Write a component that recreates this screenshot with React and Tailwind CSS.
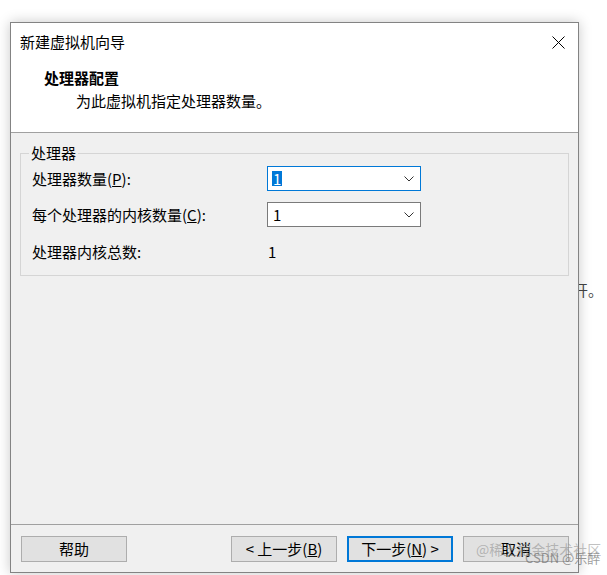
import {useState} from "react";

const Chevron = () => (
    <svg width="10" height="6" viewBox="0 0 10 6" className="text-[#333]">
        <polyline points="0.5,0.5 5,5 9.5,0.5" fill="none" stroke="currentColor" strokeWidth="1"/>
    </svg>
)

const Combo = ({value, focused}) => (
    <div
        className={
            focused
                ? "w-[154px] h-[25px] bg-white border border-[#0078d7] flex items-center justify-between pl-[4px] pr-[6px]"
                : "w-[154px] h-[25px] bg-white border border-[#7a7a7a] flex items-center justify-between pl-[5px] pr-[6px]"
        }
    >
        {focused ? (
            <span className="bg-[#0078d7] text-white px-[1px] leading-[15px] text-[15px]">{value}</span>
        ) : (
            <span className="text-[15px] leading-[15px]">{value}</span>
        )}
        <Chevron/>
    </div>
)

const Button = ({children, primary}) => (
    <button
        className={
            primary
                ? "w-[106px] h-[26px] bg-[#e1e1e1] border-2 border-[#0078d7] text-[15px] leading-[20px] text-black"
                : "w-[106px] h-[26px] bg-[#e1e1e1] border border-[#adadad] text-[15px] leading-[20px] text-black"
        }
    >
        {children}
    </button>
)

export default function App() {
    const [cores] = useState(1)

    return (
        <div className="relative w-[607px] h-[575px] bg-white overflow-hidden text-black font-['Noto_Sans_CJK_SC','Microsoft_YaHei',sans-serif]">
            {/* text of the page behind the dialog */}
            <span className="absolute left-[573px] top-[280px] text-[15px] leading-[20px] text-[#444]">开。</span>

            <div className="pt-[22px] pl-[10px]">
                <div className="relative z-10 w-[569px] h-[551px] border border-[#838383] bg-[#f0f0f0] flex flex-col shadow-[0_0_12px_rgba(0,0,0,0.22)]">
                    {/* title + header */}
                    <div className="h-[110px] bg-white border-b border-[#a0a0a0]">
                        <div className="h-[38px] flex items-center justify-between pl-[9px] pr-[13px]">
                            <span className="text-[15px] leading-[20px]">新建虚拟机向导</span>
                            <svg width="13" height="13" viewBox="0 0 13 13">
                                <line x1="0.5" y1="0.5" x2="12.5" y2="12.5" stroke="#000" strokeWidth="1"/>
                                <line x1="12.5" y1="0.5" x2="0.5" y2="12.5" stroke="#000" strokeWidth="1"/>
                            </svg>
                        </div>
                        <div className="mt-[7px] pl-[33px] text-[15px] leading-[20px] font-bold">处理器配置</div>
                        <div className="mt-[3px] pl-[65px] text-[15px] leading-[20px]">为此虚拟机指定处理器数量。</div>
                    </div>

                    {/* body */}
                    <div className="flex-1 pt-[10px] px-[9px]">
                        <fieldset className="border border-[#d5d5d5] pl-[11px] pb-[10px]">
                            <legend className="ml-[-3px] px-[2px] text-[15px] leading-[20px]">处理器</legend>
                            <div className="grid grid-cols-[235px_154px] items-center gap-y-[11px] mt-[3px] text-[15px] leading-[20px]">
                                <span>处理器数量(<span className="underline">P</span>):</span>
                                <Combo value="1" focused/>
                                <span>每个处理器的内核数量(<span className="underline">C</span>):</span>
                                <Combo value="1"/>
                                <span className="h-[27px] flex items-center">处理器内核总数:</span>
                                <span className="h-[27px] flex items-center pl-[1px]">{cores}</span>
                            </div>
                        </fieldset>
                    </div>

                    {/* footer */}
                    <div className="h-[48px] border-t border-[#a0a0a0] pt-[11px] pl-[10px] pr-[9px] flex items-start">
                        <Button>帮助</Button>
                        <div className="ml-auto flex gap-[10px]">
                            <Button>&lt; 上一步(<span className="underline">B</span>)</Button>
                            <Button primary>下一步(<span className="underline">N</span>) &gt;</Button>
                            <Button>取消</Button>
                        </div>
                    </div>
                </div>
            </div>

            {/* watermarks */}
            <span className="absolute z-20 left-[476px] top-[539px] text-[14px] leading-[20px] text-[rgba(140,140,140,0.55)] whitespace-nowrap">@稀土掘金技术社区</span>
            <span className="absolute z-20 left-[525px] top-[549px] text-[13px] leading-[18px] text-[rgba(110,110,110,0.7)] whitespace-nowrap">CSDN @乐醉</span>
        </div>
    )
}
